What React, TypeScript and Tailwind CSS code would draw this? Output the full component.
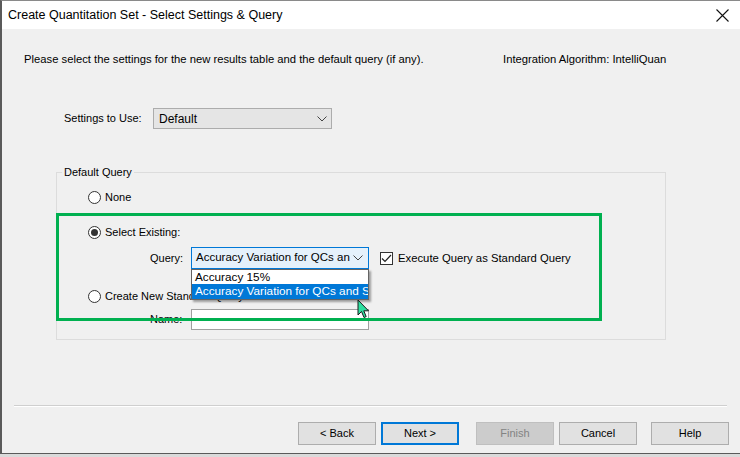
import React from "react";

const font = { fontFamily: '"Liberation Sans", Arial, sans-serif' };

function Chevron() {
  return (
    <svg width="10" height="6" viewBox="0 0 10 6" className="shrink-0">
      <path d="M0.5 0.5 L5 5 L9.5 0.5" fill="none" stroke="#444" strokeWidth="1" />
    </svg>
  );
}

function Radio({ checked }: { checked?: boolean }) {
  return (
    <span className="w-[13px] h-[13px] rounded-full border border-[#333] bg-white flex items-center justify-center shrink-0">
      {checked && <span className="w-[7px] h-[7px] rounded-full bg-[#333]" />}
    </span>
  );
}

function Btn({ children, primary, disabled }: { children: React.ReactNode; primary?: boolean; disabled?: boolean }) {
  const base = "h-[23px] w-[78px] flex items-center justify-center text-[11px]";
  if (disabled) return <div className={`${base} bg-[#cccccc] border border-[#bfbfbf] text-[#838383]`}>{children}</div>;
  if (primary) return <div className={`${base} bg-[#e1e1e1] border-2 border-[#0078d7] text-black`}>{children}</div>;
  return <div className={`${base} bg-[#e1e1e1] border border-[#adadad] text-black`}>{children}</div>;
}

function Cursor() {
  return (
    <svg width="14" height="21" viewBox="0 0 14 21">
      <path d="M1 1 L1 16 L4.5 12.5 L7 18.5 L9.2 17.6 L6.8 11.8 L11.5 11.8 Z" fill="#2ee0a0" stroke="#1a1a1a" strokeWidth="1" strokeLinejoin="round" />
    </svg>
  );
}

export default function App() {
  return (
    <div className="w-[740px] h-[457px] overflow-hidden bg-[#e6e6e6] flex flex-col text-black" style={font}>
      <div className="h-[454px] flex flex-col border-t border-l-2 border-b border-[#5a5a5a] border-t-[#8a8a8a]">
        {/* Title bar */}
        <div className="h-[28px] bg-white flex items-center justify-between pl-[6px] pr-[11px] shrink-0">
          <span className="text-[12.5px]">Create Quantitation Set - Select Settings &amp; Query</span>
          <svg width="13" height="13" viewBox="0 0 13 13">
            <path d="M0.5 0.5 L12.5 12.5 M12.5 0.5 L0.5 12.5" stroke="#111" strokeWidth="1.1" />
          </svg>
        </div>

        {/* Body */}
        <div className="flex-1 bg-[#f0f0f0] relative flex flex-col text-[11px]">
          <div className="grid grid-cols-[479px_1fr] pl-[22px] pt-[23px] leading-[14px] text-[11.25px]">
            <span>Please select the settings for the new results table and the default query (if any).</span>
            <span>Integration Algorithm: IntelliQuan</span>
          </div>

          <div className="flex items-center pl-[62px] mt-[42px]">
            <span className="w-[89px]">Settings to Use:</span>
            <div className="w-[179px] h-[21px] bg-[#e5e5e5] border border-[#acacac] flex items-center justify-between pl-[5px] pr-[4px] text-[12px]">
              <span>Default</span>
              <Chevron />
            </div>
          </div>

          <fieldset className="ml-[54px] mt-[36px] w-[610px] h-[175px] border border-[#dcdcdc]">
            <legend className="ml-[5px] px-[2px] leading-[14px]">Default Query</legend>

            <div className="flex items-center gap-[4px] pl-[31px] mt-[11px] h-[14px]">
              <Radio />
              <span>None</span>
            </div>

            <div className="flex items-center gap-[4px] pl-[31px] mt-[21px] h-[14px]">
              <Radio checked />
              <span>Select Existing:</span>
            </div>

            <div className="flex items-center pl-[93px] mt-[8px]">
              <span className="w-[41px]">Query:</span>
              <div className="relative">
                <div className="w-[178px] h-[22px] bg-[#e5f1fb] border border-[#0078d7] flex items-center justify-between pl-[4px] pr-[5px] text-[11.5px]">
                  <span className="whitespace-nowrap">Accuracy Variation for QCs an</span>
                  <Chevron />
                </div>
                <div className="absolute left-0 top-full w-[178px] border border-[#646464] bg-white text-[11.75px] leading-[14px] shadow-[2px_2px_2px_rgba(0,0,0,0.35)] z-10">
                  <div className="pl-[3px] h-[14px] whitespace-nowrap">Accuracy 15%</div>
                  <div className="pl-[3px] h-[15px] bg-[#0078d7] text-white whitespace-nowrap overflow-hidden">Accuracy Variation for QCs and ST</div>
                </div>
              </div>
              <div className="flex items-center gap-[5px] ml-[11px]">
                <span className="w-[13px] h-[13px] border border-[#333] bg-white flex items-center justify-center">
                  <svg width="11" height="9" viewBox="0 0 11 9">
                    <path d="M1 4.5 L4 7.5 L10 1" fill="none" stroke="#222" strokeWidth="1.2" />
                  </svg>
                </span>
                <span className="text-[11.3px]">Execute Query as Standard Query</span>
              </div>
            </div>

            <div className="flex items-center gap-[4px] pl-[31px] mt-[20px] h-[14px]">
              <Radio />
              <span>Create New Standard Query:</span>
            </div>

            <div className="flex items-center pl-[93px] mt-[6px]">
              <span className="w-[41px]">Name:</span>
              <div className="w-[178px] h-[21px] bg-white border border-[#a0a0a0]" />
            </div>
          </fieldset>

          <div className="mx-[12px] mr-[13px] mt-[65px] h-[2px] bg-[#cfcfcf] border-b border-white" />

          <div className="flex justify-end pr-[11px] mt-[15px]">
            <Btn>&lt; Back</Btn>
            <div className="ml-[5px]"><Btn primary>Next &gt;</Btn></div>
            <div className="ml-[17px]"><Btn disabled>Finish</Btn></div>
            <div className="ml-[5px]"><Btn>Cancel</Btn></div>
            <div className="ml-[14px]"><Btn>Help</Btn></div>
          </div>

          {/* annotation highlight */}
          <div className="absolute left-[54px] top-[184px] w-[546px] h-[108px] border-[3px] border-[#00b050] pointer-events-none" />
          {/* mouse cursor */}
          <div className="absolute left-[355px] top-[270px] z-20">
            <Cursor />
          </div>
        </div>
      </div>
      <div className="flex-1 bg-[#dadada]" />
    </div>
  );
}
